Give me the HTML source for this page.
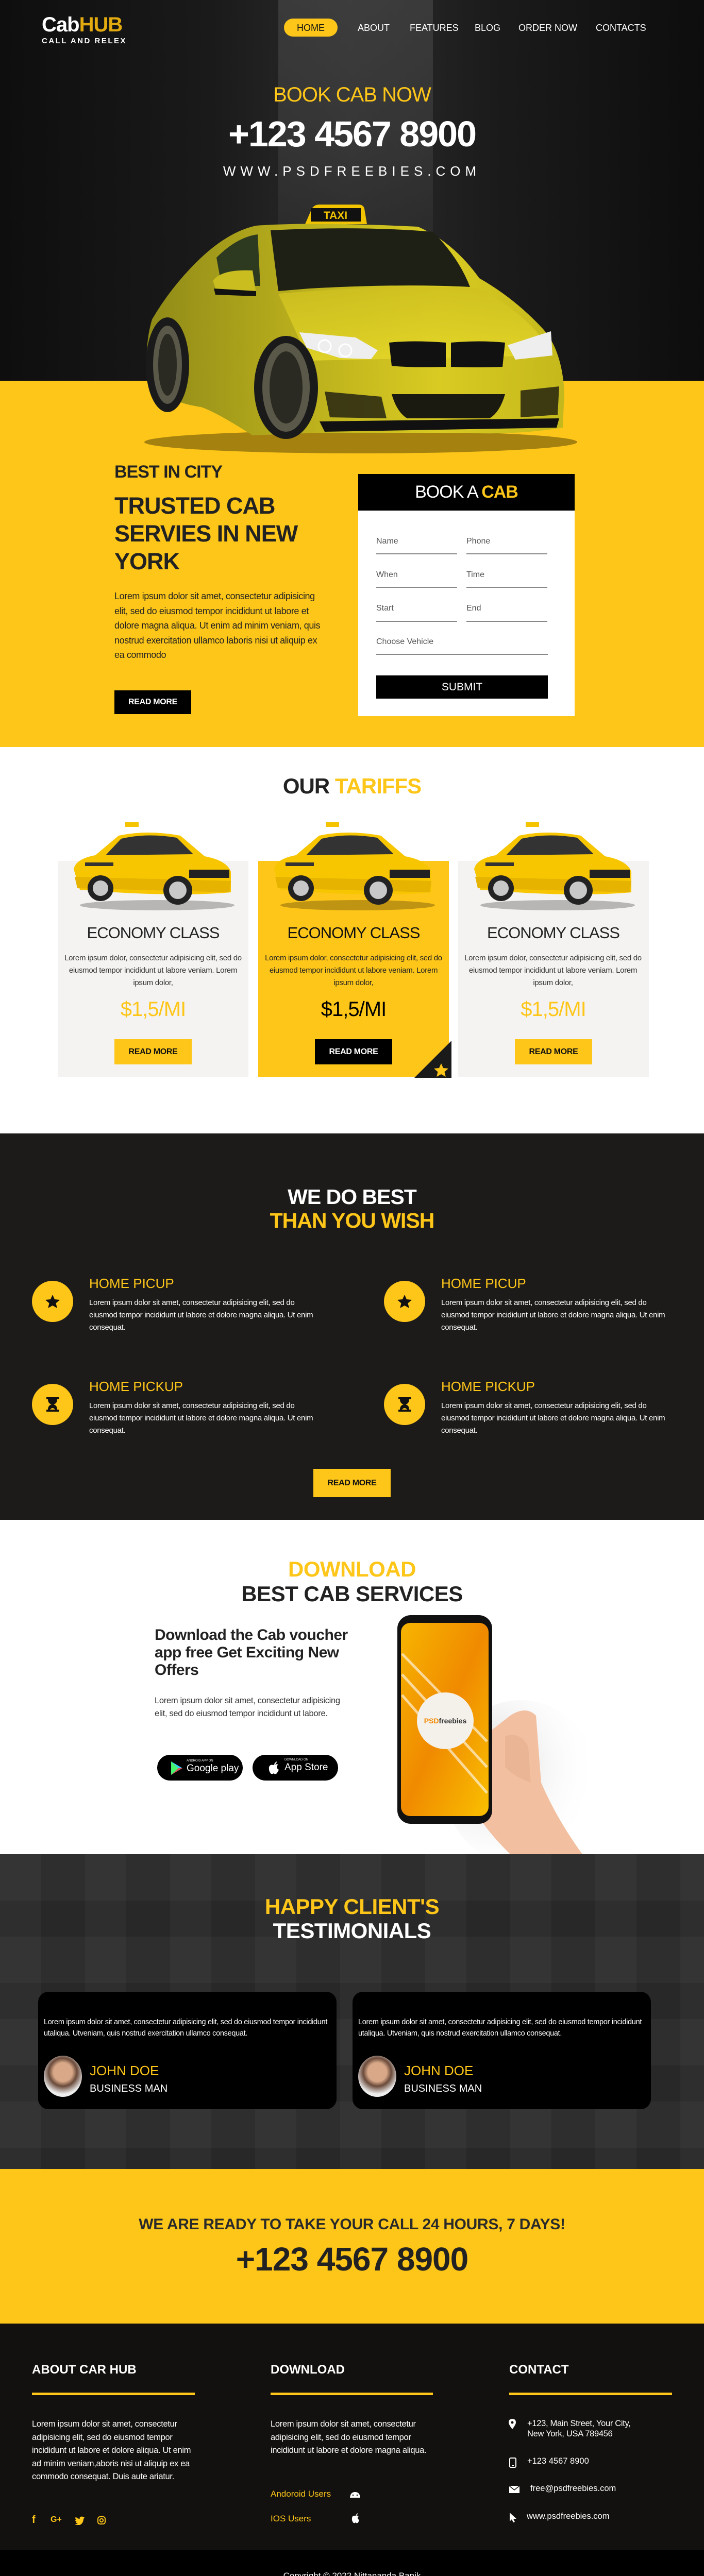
<!DOCTYPE html>
<html style="height:5050px;overflow:hidden"><head><meta charset="utf-8">
<style>
*{margin:0;padding:0;box-sizing:border-box}
html,body{width:1366px;height:5050px;overflow:hidden}
body{position:relative;font-family:"Liberation Sans",sans-serif;background:#fff}
.a{position:absolute}
.y{color:#fec619}
.c{text-align:center}
.btn{position:absolute;font-weight:bold;font-size:16px;text-align:center;letter-spacing:-.3px}
.hid{position:absolute;left:0;top:0;width:0;height:0}
</style></head><body>

<!-- HERO -->
<div class="a" style="left:0;top:0;width:1366px;height:739px;background:linear-gradient(90deg,#0e0e0e 0%,#1a1a1a 30%,#2c2c2c 50%,#1b1b1b 70%,#0d0d0d 100%)"></div>
<div class="a" style="left:540px;top:0;width:300px;height:739px;background:linear-gradient(180deg,#444 0%,#3a3a3a 40%,#1a1a1a 100%);opacity:.7"></div>
<div class="a" style="left:0;top:739px;width:1366px;height:711px;background:#fec619"></div>

<div class="a" style="left:81px;top:26px;font-size:40px;font-weight:bold;color:#fff;letter-spacing:-1px">Cab<span style="color:#e3aa10">HUB</span></div>
<div class="a" style="left:81px;top:71px;font-size:15px;font-weight:bold;color:#fff;letter-spacing:2.5px">CALL AND RELEX</div>

<div class="a" style="left:551px;top:36px;width:104px;height:35px;border-radius:18px;background:#fec619"></div>
<div class="a" style="left:551px;top:44px;width:104px;font-size:18px;color:#111;text-align:center">HOME</div>
<div class="a" style="left:694px;top:44px;font-size:18px;color:#fff">ABOUT</div>
<div class="a" style="left:795px;top:44px;font-size:18px;color:#fff">FEATURES</div>
<div class="a" style="left:921px;top:44px;font-size:18px;color:#fff">BLOG</div>
<div class="a" style="left:1006px;top:44px;font-size:18px;color:#fff">ORDER NOW</div>
<div class="a" style="left:1156px;top:44px;font-size:18px;color:#fff">CONTACTS</div>

<div class="a c" style="left:0;top:162px;width:1366px;font-size:40px;color:#fec619;letter-spacing:-1px">BOOK CAB NOW</div>
<div class="a c" style="left:0;top:220px;width:1366px;font-size:70px;font-weight:bold;color:#fff;letter-spacing:-2px">+123 4567 8900</div>
<div class="a c" style="left:0;top:317px;width:1366px;font-size:26px;color:#fff;letter-spacing:9px">WWW.PSDFREEBIES.COM</div>

<svg class="a" style="left:0;top:0" width="1366" height="900" viewBox="0 0 1366 900">
 <defs>
  <linearGradient id="cb" x1="0" y1="0" x2="1" y2="0"><stop offset="0" stop-color="#8f8a18"/><stop offset=".35" stop-color="#b8ad1c"/><stop offset=".7" stop-color="#d9cb22"/><stop offset="1" stop-color="#c4b81c"/></linearGradient>
  <linearGradient id="hd" x1="0" y1="0" x2="0" y2="1"><stop offset="0" stop-color="#cfc020"/><stop offset="1" stop-color="#e6d828"/></linearGradient>
 </defs>
 <ellipse cx="700" cy="858" rx="420" ry="22" fill="#000" opacity=".35"/>
 <path d="M605 405 Q610 397 620 397 L695 397 Q705 397 707 405 L712 435 L592 435Z" fill="#f2c400"/>
 <rect x="603" y="404" width="97" height="26" fill="#111"/>
 <text x="651" y="425" fill="#f2c400" font-size="21" font-weight="bold" text-anchor="middle" font-family="Liberation Sans">TAXI</text>
 <path d="M497 438 Q600 430 811 440 Q880 470 930 540 Q1000 580 1055 640 Q1090 680 1095 760 L1092 830 Q1000 845 900 840 L620 840 L490 845 Q420 800 390 790 Q320 780 286 740 Q280 670 295 620 Q330 560 380 510 Q440 450 497 438Z" fill="url(#cb)"/>
 <path d="M525 447 Q700 438 840 450 Q890 500 912 557 Q780 550 600 560 L540 565Z" fill="#1e2016"/>
 <path d="M420 500 Q460 460 500 455 L505 555 L430 555 Z" fill="#2e3a20"/>
 <path d="M540 570 Q780 550 930 560 Q1040 620 1070 690 L600 700Z" fill="url(#hd)" opacity=".8"/>
 <path d="M413 545 Q430 522 490 525 L497 570 L420 565Z" fill="#c9bd20"/><path d="M415 560 L497 565 L497 575 L418 572Z" fill="#111"/>
 <path d="M581 645 L690 655 L733 680 L720 697 L660 695 L595 675Z" fill="#eee"/>
 <circle cx="630" cy="672" r="12" fill="none" stroke="#fff" stroke-width="3"/><circle cx="670" cy="680" r="12" fill="none" stroke="#fff" stroke-width="3"/>
 <path d="M985 670 L1069 643 L1072 690 L1000 698Z" fill="#eee"/>
 <path d="M755 665 Q800 660 865 665 L865 712 Q800 714 760 710Z" fill="#111"/>
 <path d="M875 665 Q930 660 980 665 L975 712 Q920 714 875 712Z" fill="#111"/>
 <path d="M760 765 L980 765 Q970 800 950 812 L790 812 Q770 800 760 765Z" fill="#1a1a10"/>
 <path d="M630 760 L740 770 L750 812 L640 810Z" fill="#1a1a10" opacity=".8"/>
 <path d="M1010 758 L1085 750 L1082 805 L1010 810Z" fill="#1a1a10" opacity=".8"/>
 <path d="M620 818 L1085 812 L1080 830 L630 838Z" fill="#111"/>
 <ellipse cx="325" cy="708" rx="42" ry="92" fill="#1a1a1a"/><ellipse cx="325" cy="708" rx="28" ry="76" fill="#5a5848"/><ellipse cx="325" cy="708" rx="18" ry="60" fill="#2a2a22"/>
 <ellipse cx="555" cy="752" rx="62" ry="100" fill="#1a1a1a"/><ellipse cx="555" cy="752" rx="46" ry="86" fill="#5a5848"/><ellipse cx="555" cy="752" rx="32" ry="70" fill="#2a2a22"/>
</svg>

<!-- BEST IN CITY -->
<div class="a" style="left:222px;top:897px;font-size:34px;font-weight:bold;color:#222;letter-spacing:-1px">BEST IN CITY</div>
<div class="a" style="left:222px;top:955px;width:380px;font-size:45px;line-height:54px;font-weight:bold;color:#222;letter-spacing:-1px">TRUSTED CAB SERVIES IN NEW YORK</div>
<div class="a" style="left:222px;top:1143px;width:400px;font-size:18px;line-height:28.6px;color:#222;letter-spacing:-.4px">Lorem ipsum dolor sit amet, consectetur adipisicing elit, sed do eiusmod tempor incididunt ut labore et dolore magna aliqua. Ut enim ad minim veniam, quis nostrud exercitation ullamco laboris nisi ut aliquip ex ea commodo</div>
<div class="btn" style="left:222px;top:1340px;width:149px;height:46px;line-height:46px;background:#000;color:#fff">READ MORE</div>

<div class="a" style="left:695px;top:920px;width:420px;height:470px;background:#fff"></div>
<div class="a c" style="left:695px;top:920px;width:420px;height:71px;line-height:71px;background:#000;color:#fff;font-size:34px;letter-spacing:-1px">BOOK A <span class="y" style="font-weight:bold">CAB</span></div>
<div class="a" style="left:730px;top:1042px;font-size:16px;color:#555">Name</div><div class="a" style="left:905px;top:1042px;font-size:16px;color:#555">Phone</div>
<div class="a" style="left:730px;top:1107px;font-size:16px;color:#555">When</div><div class="a" style="left:905px;top:1107px;font-size:16px;color:#555">Time</div>
<div class="a" style="left:730px;top:1172px;font-size:16px;color:#555">Start</div><div class="a" style="left:905px;top:1172px;font-size:16px;color:#555">End</div>
<div class="a" style="left:730px;top:1237px;font-size:16px;color:#555">Choose Vehicle</div>
<div class="a" style="left:730px;top:1074px;width:157px;height:2px;background:#888"></div><div class="a" style="left:905px;top:1074px;width:157px;height:2px;background:#888"></div>
<div class="a" style="left:730px;top:1139px;width:157px;height:2px;background:#888"></div><div class="a" style="left:905px;top:1139px;width:157px;height:2px;background:#888"></div>
<div class="a" style="left:730px;top:1205px;width:157px;height:2px;background:#888"></div><div class="a" style="left:905px;top:1205px;width:157px;height:2px;background:#888"></div>
<div class="a" style="left:730px;top:1269px;width:333px;height:2px;background:#888"></div>
<div class="a c" style="left:730px;top:1311px;width:333px;height:45px;line-height:45px;background:#000;color:#fff;font-size:21px">SUBMIT</div>

<!-- TARIFFS -->
<div class="a c" style="left:0;top:1502px;width:1366px;font-size:42px;font-weight:bold;color:#222;letter-spacing:-1px">OUR <span class="y">TARIFFS</span></div>

<div class="a" style="left:112px;top:1671px;width:370px;height:419px;background:#f4f3f2"></div>
<div class="a" style="left:501px;top:1671px;width:370px;height:419px;background:#fec619"></div>
<div class="a" style="left:888px;top:1671px;width:371px;height:419px;background:#f4f3f2"></div>
<svg class="a" style="left:804px;top:2020px" width="72" height="72"><path d="M72 0 L72 72 L0 72Z" fill="#1a1a1a"/><path d="M52 44 l4 9 10 1 -7.5 6.5 2.3 9.5 -8.8-5 -8.8 5 2.3-9.5 -7.5-6.5 10-1z" fill="#fec619"/></svg>

<svg class="hid"><defs>
<g id="taxi">
 <ellipse cx="170" cy="165" rx="150" ry="10" fill="#000" opacity=".25"/>
 <rect x="108" y="4" width="26" height="9" fill="#f5c400"/>
 <path d="M8 95 Q12 75 50 68 L95 30 Q150 18 215 30 L262 70 Q305 78 313 100 L313 140 Q200 150 20 135 Z" fill="#f7c600"/>
 <path d="M100 36 Q150 24 208 34 L240 66 L70 68Z" fill="#333"/>
 <path d="M10 110 L313 118 L310 140 L15 132Z" fill="#e5b300"/>
 <rect x="232" y="96" width="78" height="16" fill="#222"/>
 <circle cx="60" cy="132" r="25" fill="#222"/><circle cx="60" cy="132" r="15" fill="#c8c8c8"/>
 <circle cx="210" cy="136" r="28" fill="#222"/><circle cx="210" cy="136" r="17" fill="#c8c8c8"/>
 <rect x="30" y="82" width="55" height="7" fill="#333"/>
</g></defs></svg>
<svg class="a" style="left:135px;top:1592px" width="330" height="175" viewBox="0 0 330 175"><use href="#taxi"/></svg>
<svg class="a" style="left:524px;top:1592px" width="330" height="175" viewBox="0 0 330 175"><use href="#taxi"/></svg>
<svg class="a" style="left:912px;top:1592px" width="330" height="175" viewBox="0 0 330 175"><use href="#taxi"/></svg>

<div class="a c" style="left:112px;top:1793px;width:370px;font-size:31px;color:#222;letter-spacing:-1px">ECONOMY CLASS</div>
<div class="a c" style="left:501px;top:1793px;width:370px;font-size:31px;color:#111;letter-spacing:-1px">ECONOMY CLASS</div>
<div class="a c" style="left:888px;top:1793px;width:371px;font-size:31px;color:#222;letter-spacing:-1px">ECONOMY CLASS</div>
<div class="a c" style="left:122px;top:1848px;width:350px;font-size:15px;line-height:24px;color:#333;letter-spacing:-.3px">Lorem ipsum dolor, consectetur adipisicing elit, sed do eiusmod tempor incididunt ut labore veniam. Lorem ipsum dolor,</div>
<div class="a c" style="left:511px;top:1848px;width:350px;font-size:15px;line-height:24px;color:#222;letter-spacing:-.3px">Lorem ipsum dolor, consectetur adipisicing elit, sed do eiusmod tempor incididunt ut labore veniam. Lorem ipsum dolor,</div>
<div class="a c" style="left:898px;top:1848px;width:350px;font-size:15px;line-height:24px;color:#333;letter-spacing:-.3px">Lorem ipsum dolor, consectetur adipisicing elit, sed do eiusmod tempor incididunt ut labore veniam. Lorem ipsum dolor,</div>
<div class="a c y" style="left:112px;top:1937px;width:370px;font-size:40px;letter-spacing:-1px">$1,5/MI</div>
<div class="a c" style="left:501px;top:1937px;width:370px;font-size:40px;color:#000;letter-spacing:-1px">$1,5/MI</div>
<div class="a c y" style="left:888px;top:1937px;width:371px;font-size:40px;letter-spacing:-1px">$1,5/MI</div>
<div class="btn" style="left:222px;top:2017px;width:150px;height:49px;line-height:49px;background:#fec619;color:#111">READ MORE</div>
<div class="btn" style="left:611px;top:2017px;width:150px;height:49px;line-height:49px;background:#000;color:#fff">READ MORE</div>
<div class="btn" style="left:999px;top:2017px;width:150px;height:49px;line-height:49px;background:#fec619;color:#111">READ MORE</div>

<!-- WE DO BEST -->
<div class="a" style="left:0;top:2200px;width:1366px;height:750px;background:radial-gradient(ellipse 420px 520px at 1190px 2560px,#6a5645 0%,#3e3129 45%,rgba(20,20,20,0) 100%),radial-gradient(ellipse 260px 300px at 480px 2480px,#3a2e28 0%,rgba(25,25,25,0) 100%),#1b1a19"></div>
<div class="a" style="left:0;top:2200px;width:1366px;height:750px;background:radial-gradient(ellipse 500px 600px at 1180px 2560px,#6e5a48 0%,#463629 40%,rgba(30,28,26,0) 100%),radial-gradient(ellipse 280px 330px at 480px 2480px,#3e322b 0%,rgba(28,27,26,0) 100%),#1c1b1a"></div>
<div class="a c" style="left:0;top:2300px;width:1366px;font-size:41px;font-weight:bold;color:#fff;letter-spacing:-1px">WE DO BEST</div>
<div class="a c y" style="left:0;top:2346px;width:1366px;font-size:41px;font-weight:bold;letter-spacing:-1px">THAN YOU WISH</div>

<svg class="hid"><defs>
<g id="st"><circle cx="40" cy="40" r="40" fill="#fec619"/><path d="M40 27 l4 9 10 1 -7.5 6.5 2.3 9.5 -8.8-5 -8.8 5 2.3-9.5 -7.5-6.5 10-1z" fill="#111"/></g>
<g id="hg"><circle cx="40" cy="40" r="40" fill="#fec619"/><path d="M28 26 h24 v4 h-3 q0 8 -7 10 q7 2 7 10 h3 v4 h-24 v-4 h3 q0 -8 7 -10 q-7 -2 -7 -10 h-3z" fill="#111"/><path d="M35 50 q5-6 10 0z" fill="#fec619"/></g>
</defs></svg>
<svg class="a" style="left:62px;top:2486px" width="80" height="80"><use href="#st"/></svg>
<svg class="a" style="left:745px;top:2486px" width="80" height="80"><use href="#st"/></svg>
<svg class="a" style="left:62px;top:2686px" width="80" height="80"><use href="#hg"/></svg>
<svg class="a" style="left:745px;top:2686px" width="80" height="80"><use href="#hg"/></svg>
<div class="a y" style="left:173px;top:2476px;font-size:26px">HOME PICUP</div>
<div class="a y" style="left:856px;top:2476px;font-size:26px">HOME PICUP</div>
<div class="a y" style="left:173px;top:2676px;font-size:26px">HOME PICKUP</div>
<div class="a y" style="left:856px;top:2676px;font-size:26px">HOME PICKUP</div>
<div class="a" style="left:173px;top:2517px;width:450px;font-size:15px;line-height:24px;color:#fff;letter-spacing:-.3px">Lorem ipsum dolor sit amet, consectetur adipisicing elit, sed do eiusmod tempor incididunt ut labore et dolore magna aliqua. Ut enim consequat.</div>
<div class="a" style="left:856px;top:2517px;width:450px;font-size:15px;line-height:24px;color:#fff;letter-spacing:-.3px">Lorem ipsum dolor sit amet, consectetur adipisicing elit, sed do eiusmod tempor incididunt ut labore et dolore magna aliqua. Ut enim consequat.</div>
<div class="a" style="left:173px;top:2717px;width:450px;font-size:15px;line-height:24px;color:#fff;letter-spacing:-.3px">Lorem ipsum dolor sit amet, consectetur adipisicing elit, sed do eiusmod tempor incididunt ut labore et dolore magna aliqua. Ut enim consequat.</div>
<div class="a" style="left:856px;top:2717px;width:450px;font-size:15px;line-height:24px;color:#fff;letter-spacing:-.3px">Lorem ipsum dolor sit amet, consectetur adipisicing elit, sed do eiusmod tempor incididunt ut labore et dolore magna aliqua. Ut enim consequat.</div>
<div class="btn" style="left:608px;top:2851px;width:150px;height:55px;line-height:55px;background:#fec619;color:#111">READ MORE</div>

<!-- DOWNLOAD -->
<div class="a c y" style="left:0;top:3022px;width:1366px;font-size:42px;font-weight:bold;letter-spacing:-.5px">DOWNLOAD</div>
<div class="a c" style="left:0;top:3070px;width:1366px;font-size:42px;font-weight:bold;color:#222;letter-spacing:-.5px">BEST CAB SERVICES</div>
<div class="a" style="left:300px;top:3157px;width:390px;font-size:30px;line-height:34px;font-weight:bold;color:#222;letter-spacing:-.5px">Download the Cab voucher app free Get Exciting New Offers</div>
<div class="a" style="left:300px;top:3289px;width:380px;font-size:16.5px;line-height:24.5px;color:#333;letter-spacing:-.3px">Lorem ipsum dolor sit amet, consectetur adipisicing elit, sed do eiusmod tempor incididunt ut labore.</div>
<div class="a" style="left:305px;top:3406px;width:166px;height:50px;border-radius:25px;background:#000"></div>
<svg class="a" style="left:330px;top:3418px" width="26" height="28"><path d="M2 1 L24 14 L2 27Z" fill="#3bccff"/><path d="M2 1 L16 14 L2 27Z" fill="#48ff48" opacity=".8"/><path d="M16 14 L24 14 L2 27Z" fill="#f33" opacity=".8"/></svg>
<div class="a" style="left:362px;top:3415px;font-size:6px;color:#fff">ANDROID APP ON</div>
<div class="a" style="left:362px;top:3422px;font-size:19px;color:#fff">Google play</div>
<div class="a" style="left:490px;top:3406px;width:166px;height:50px;border-radius:25px;background:#000"></div>
<svg class="a" style="left:520px;top:3418px" width="22" height="26"><path d="M11 8 Q14 2 17 1 Q17 5 13 7Z M10 8 Q4 6 2 12 Q1 20 6 25 Q9 26 11 24 Q13 26 16 25 Q19 22 21 17 Q17 15 17 11 Q18 8 20 7 Q16 5 12 8Z" fill="#fff"/></svg>
<div class="a" style="left:552px;top:3413px;font-size:6px;color:#fff">DOWNLOAD ON</div>
<div class="a" style="left:552px;top:3420px;font-size:19px;color:#fff">App Store</div>

<svg class="a" style="left:740px;top:3130px" width="420" height="469" viewBox="0 0 420 469">
 <defs><linearGradient id="ph" x1="0" y1="0" x2="1" y2="1"><stop offset="0" stop-color="#f7b500"/><stop offset=".5" stop-color="#f08a00"/><stop offset="1" stop-color="#f9c000"/></linearGradient>
 <radialGradient id="sh" cx=".3" cy=".4" r=".7"><stop offset="0" stop-color="#bbb" stop-opacity=".6"/><stop offset="1" stop-color="#fff" stop-opacity="0"/></radialGradient></defs>
 <ellipse cx="270" cy="330" rx="150" ry="160" fill="url(#sh)"/>
 <path d="M250 200 Q280 180 300 200 L310 330 Q340 400 390 469 L250 469 Q200 420 180 380 L150 340 Q140 300 160 270Z" fill="#f2c0a0"/>
 <rect x="31" y="5" width="184" height="405" rx="26" fill="#111"/>
 <rect x="38" y="20" width="170" height="375" rx="18" fill="url(#ph)"/>
 <path d="M40 120 L205 300 M40 160 L205 350 M40 80 L205 250" stroke="#fff" stroke-width="5" opacity=".6"/>
 <circle cx="124" cy="210" r="55" fill="#f4f0ea"/>
 <text x="124" y="215" font-size="14" font-weight="bold" text-anchor="middle" font-family="Liberation Sans"><tspan fill="#f08a00">PSD</tspan><tspan fill="#333">freebies</tspan></text>
 <path d="M240 240 Q270 230 285 260 L290 330 Q260 320 240 300Z" fill="#eab595"/>
</svg>

<!-- TESTIMONIALS -->
<div class="a" style="left:0;top:3599px;width:1366px;height:611px;background:repeating-linear-gradient(90deg,rgba(255,255,255,.025) 0 80px,rgba(0,0,0,.03) 80px 165px),repeating-linear-gradient(180deg,rgba(255,255,255,.02) 0 90px,rgba(0,0,0,.04) 90px 160px),#2b2b2b"></div>
<div class="a c y" style="left:0;top:3677px;width:1366px;font-size:42px;font-weight:bold;letter-spacing:-.5px">HAPPY CLIENT'S</div>
<div class="a c" style="left:0;top:3724px;width:1366px;font-size:42px;font-weight:bold;color:#fff;letter-spacing:-.5px">TESTIMONIALS</div>
<div class="a" style="left:74px;top:3866px;width:579px;height:228px;border-radius:20px;background:#000"></div>
<div class="a" style="left:684px;top:3866px;width:579px;height:228px;border-radius:20px;background:#000"></div>
<div class="a" style="left:85px;top:3914px;width:560px;font-size:14.5px;line-height:22px;color:#fff;letter-spacing:-.3px">Lorem ipsum dolor sit amet, consectetur adipisicing elit, sed do eiusmod tempor incididunt utaliqua. Utveniam, quis nostrud exercitation ullamco consequat.</div>
<div class="a" style="left:695px;top:3914px;width:560px;font-size:14.5px;line-height:22px;color:#fff;letter-spacing:-.3px">Lorem ipsum dolor sit amet, consectetur adipisicing elit, sed do eiusmod tempor incididunt utaliqua. Utveniam, quis nostrud exercitation ullamco consequat.</div>
<div class="a" style="left:85px;top:3990px;width:74px;height:80px;border-radius:50%;background:radial-gradient(circle at 50% 40%,#d8a888 0 30%,#6a4a3a 45%,#eee 70%)"></div>
<div class="a" style="left:695px;top:3990px;width:74px;height:80px;border-radius:50%;background:radial-gradient(circle at 50% 40%,#d8a888 0 30%,#6a4a3a 45%,#eee 70%)"></div>
<div class="a y" style="left:174px;top:4004px;font-size:26px">JOHN DOE</div>
<div class="a y" style="left:784px;top:4004px;font-size:26px">JOHN DOE</div>
<div class="a" style="left:174px;top:4043px;font-size:20px;color:#fff">BUSINESS MAN</div>
<div class="a" style="left:784px;top:4043px;font-size:20px;color:#fff">BUSINESS MAN</div>

<!-- CALL -->
<div class="a" style="left:0;top:4210px;width:1366px;height:300px;background:#fec619"></div>
<div class="a c" style="left:0;top:4301px;width:1366px;font-size:30px;font-weight:bold;color:#2a2a2a;letter-spacing:-.3px">WE ARE READY TO TAKE YOUR CALL 24 HOURS, 7 DAYS!</div>
<div class="a c" style="left:0;top:4348px;width:1366px;font-size:64px;font-weight:bold;color:#222;letter-spacing:-1px">+123 4567 8900</div>

<!-- FOOTER -->
<div class="a" style="left:0;top:4510px;width:1366px;height:439px;background:radial-gradient(ellipse 500px 250px at 300px 4850px,#2e2618,transparent),radial-gradient(ellipse 400px 200px at 700px 4600px,#211c16,transparent),#13110f"></div>
<div class="a" style="left:0;top:4949px;width:1366px;height:101px;background:#000"></div>
<div class="a" style="left:62px;top:4586px;font-size:24px;font-weight:bold;color:#fff">ABOUT CAR HUB</div>
<div class="a" style="left:525px;top:4586px;font-size:24px;font-weight:bold;color:#fff">DOWNLOAD</div>
<div class="a" style="left:988px;top:4586px;font-size:24px;font-weight:bold;color:#fff">CONTACT</div>
<div class="a" style="left:62px;top:4644px;width:316px;height:5px;background:#fec619"></div>
<div class="a" style="left:525px;top:4644px;width:315px;height:5px;background:#fec619"></div>
<div class="a" style="left:988px;top:4644px;width:316px;height:5px;background:#fec619"></div>
<div class="a" style="left:62px;top:4693px;width:330px;font-size:16.5px;line-height:25.5px;color:#fff;letter-spacing:-.3px">Lorem ipsum dolor sit amet, consectetur adipisicing elit, sed do eiusmod tempor incididunt ut labore et dolore aliqua. Ut enim ad minim veniam,aboris nisi ut aliquip ex ea commodo consequat. Duis aute ariatur.</div>
<div class="a" style="left:525px;top:4693px;width:310px;font-size:16.5px;line-height:25.5px;color:#fff;letter-spacing:-.3px">Lorem ipsum dolor sit amet, consectetur adipisicing elit, sed do eiusmod tempor incididunt ut labore et dolore magna aliqua.</div>
<div class="a y" style="left:62px;top:4880px;font-size:20px;font-weight:bold">f</div>
<div class="a y" style="left:98px;top:4882px;font-size:16px;font-weight:bold">G+</div>
<svg class="a" style="left:146px;top:4884px" width="20" height="17"><path d="M19 2 q-1 1 -2 1 q1-1 1-2 q-1 1-2 1 q-3-3-7 0 q-1 2 0 3 q-5 0-8-4 q-2 4 1 6 q-1 0-2 0 q0 3 3 4 q-1 0-2 0 q1 3 4 3 q-3 2-6 2 q8 4 14-2 q3-4 3-9 q1-1 2-2z" fill="#fec619"/></svg>
<svg class="a" style="left:188px;top:4883px" width="18" height="18"><rect x="2" y="2" width="14" height="14" rx="4" fill="none" stroke="#fec619" stroke-width="2"/><circle cx="9" cy="9" r="3.2" fill="none" stroke="#fec619" stroke-width="2"/></svg>
<div class="a y" style="left:525px;top:4831px;font-size:17px">Andoroid Users</div>
<div class="a y" style="left:525px;top:4879px;font-size:17px">IOS Users</div>
<svg class="a" style="left:677px;top:4834px" width="24" height="14"><path d="M2 14 Q3 3 12 3 Q21 3 22 14Z" fill="#fff"/><circle cx="8" cy="9" r="1.3" fill="#13110f"/><circle cx="16" cy="9" r="1.3" fill="#13110f"/></svg>
<svg class="a" style="left:682px;top:4878px" width="16" height="20"><path d="M8 5 Q10 1 12 0 Q12 3 9 5Z M7 5 Q2 4 1 9 Q0 15 4 19 Q6 20 8 18 Q10 20 12 19 Q14 17 15 13 Q12 12 12 9 Q12 7 14 6 Q11 4 8 5Z" fill="#fff"/></svg>
<svg class="a" style="left:987px;top:4695px" width="14" height="20"><path d="M7 0 Q14 0 14 7 Q14 11 7 20 Q0 11 0 7 Q0 0 7 0Z" fill="#fff"/><circle cx="7" cy="7" r="2.5" fill="#13110f"/></svg>
<div class="a" style="left:1023px;top:4694px;font-size:16.5px;line-height:20px;color:#fff;letter-spacing:-.3px">+123, Main Street, Your City,<br>New York, USA 789456</div>
<svg class="a" style="left:988px;top:4770px" width="14" height="20"><rect x="1" y="1" width="12" height="18" rx="2" fill="none" stroke="#fff" stroke-width="2"/><rect x="5" y="15" width="4" height="2" fill="#fff"/></svg>
<div class="a" style="left:1023px;top:4768px;font-size:16.5px;color:#fff">+123 4567 8900</div>
<svg class="a" style="left:988px;top:4825px" width="20" height="14"><rect x="0" y="0" width="20" height="14" fill="#fff"/><path d="M0 0 L10 8 L20 0" fill="none" stroke="#13110f" stroke-width="1.5"/></svg>
<div class="a" style="left:1029px;top:4821px;font-size:16.5px;color:#fff">free@psdfreebies.com</div>
<svg class="a" style="left:988px;top:4876px" width="16" height="20"><path d="M1 1 L1 18 L5 14 L8 20 L11 19 L8 13 L14 13Z" fill="#fff"/></svg>
<div class="a" style="left:1022px;top:4875px;font-size:16.5px;color:#fff">www.psdfreebies.com</div>
<div class="a c" style="left:0;top:4990px;width:1366px;font-size:17px;color:#fff">Copyright © 2022 Nittananda Banik</div>
</body></html>
